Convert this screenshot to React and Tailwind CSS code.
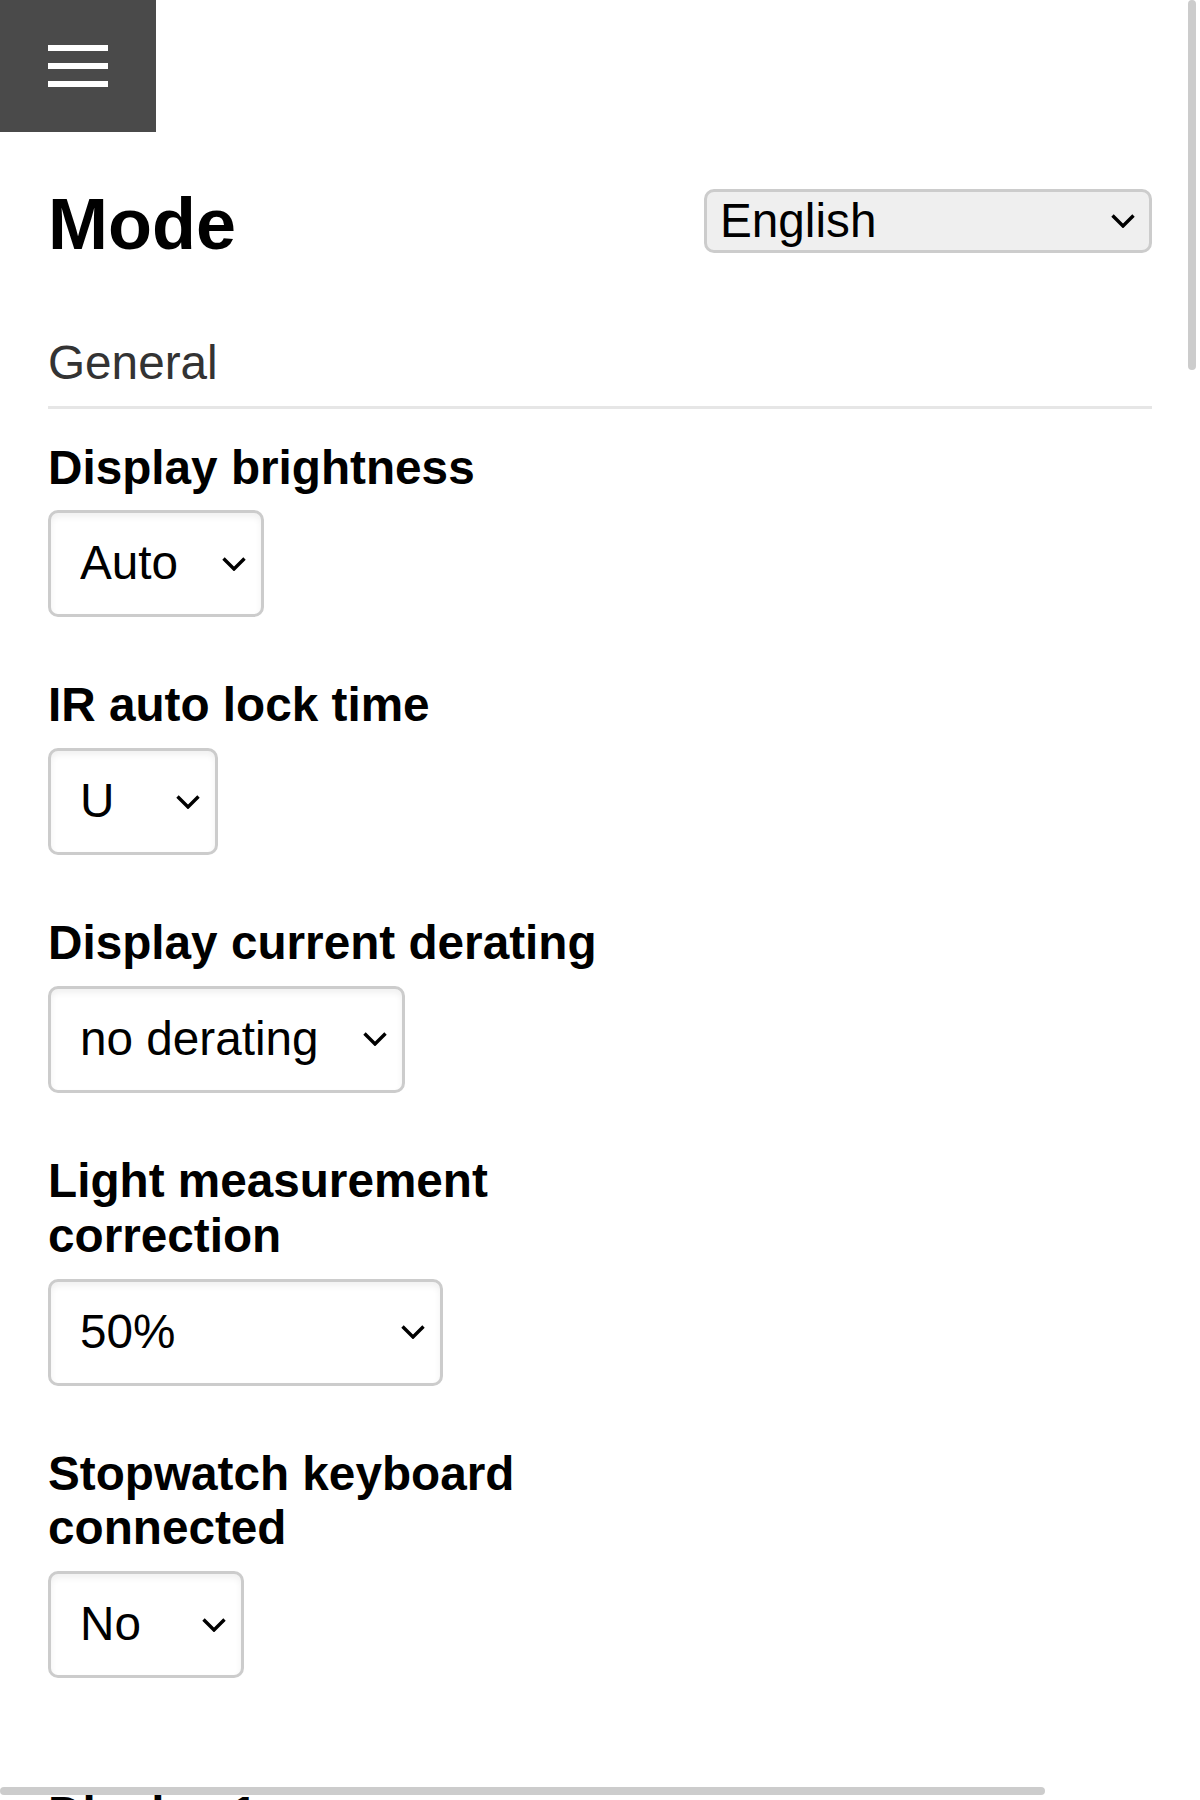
import React, { useState } from 'react';

function Chevron({ className }) {
  return (
    <svg viewBox="0 0 24 14" className={className} fill="none" stroke="currentColor" strokeWidth="3.4" strokeLinecap="butt" strokeLinejoin="miter">
      <polyline points="1.5,1.5 12,12 22.5,1.5" />
    </svg>
  );
}

function Field({ label, options, width }) {
  const [value, setValue] = useState(options[0]);

  return (
    <div className="flex flex-col items-start">
      <label className="block max-w-[600px] text-[47.7px] font-bold leading-[1.149] text-black">{label}</label>
      <div className={`relative mt-[15px] ${width}`}>
        <select
          value={value}
          onChange={(e) => setValue(e.target.value)}
          className="w-full h-[107px] appearance-none bg-white border-[3px] border-[#cccccc] rounded-[10px] pl-[29px] pr-[60px] py-0 text-[47.7px] leading-[1.149] text-black shadow-[inset_0_4px_6px_rgba(0,0,0,0.06)] outline-none"
        >
          {options.map((o) => (
            <option key={o} value={o}>{o}</option>
          ))}
        </select>
        <Chevron className="pointer-events-none absolute right-[18px] top-1/2 -translate-y-1/2 w-[24px] h-[14px] text-black" />
      </div>
    </div>
  );
}

export default function App() {
  const [lang, setLang] = useState('English');

  return (
    <div className="relative h-[1800px] overflow-hidden bg-white font-['Liberation_Sans',Arial,sans-serif] text-black">
      {/* Menu toggle */}
      <button className="w-[156px] h-[132px] bg-[#4a4a4a] flex flex-col items-center justify-center gap-[12px]">
        <span className="block w-[60px] h-[6px] bg-white" />
        <span className="block w-[60px] h-[6px] bg-white" />
        <span className="block w-[60px] h-[6px] bg-white" />
      </button>

      <div className="px-[48px]">
        {/* Header */}
        <div className="mt-[51px] flex items-start justify-between">
          <h1 className="text-[72px] font-bold leading-[1.149]">Mode</h1>
          <div className="relative mt-[6px] w-[448px]">
            <select
              value={lang}
              onChange={(e) => setLang(e.target.value)}
              className="w-full h-[64px] appearance-none bg-[#efefef] border-[3px] border-[#cccccc] rounded-[10px] pl-[13px] pr-[50px] py-0 text-[47.7px] leading-[1.149] text-black outline-none"
            >
              <option>English</option>
              <option>Deutsch</option>
              <option>Français</option>
            </select>
            <Chevron className="pointer-events-none absolute right-[17px] top-1/2 -translate-y-1/2 w-[24px] h-[14px] text-black" />
          </div>
        </div>

        {/* General section */}
        <h2 className="mt-[70px] pb-[15px] border-b-[3px] border-[#e6e6e6] text-[47.7px] font-normal leading-[1.149] text-[#333333]">
          General
        </h2>

        <div className="mt-[32px] flex flex-col gap-[61px]">
          <Field label="Display brightness" options={['Auto', 'Low', 'High']} width="w-[216px]" />
          <Field label="IR auto lock time" options={['U', '1', '5']} width="w-[170px]" />
          <Field label="Display current derating" options={['no derating', '50%']} width="w-[357px]" />
          <Field label="Light measurement correction" options={['50%', '100%']} width="w-[395px]" />
          <Field label="Stopwatch keyboard connected" options={['No', 'Yes']} width="w-[196px]" />
        </div>

        <h2 className="mt-[109px] text-[47.7px] font-bold leading-[1.149] text-black">Display 1</h2>
      </div>

      {/* overlay scroll indicators */}
      <div className="absolute top-0 right-[4px] w-[8px] h-[370px] rounded-full bg-[#cccccc]" />
      <div className="absolute bottom-[5px] left-0 w-[1045px] h-[8px] rounded-full bg-[#cccccc]" />
    </div>
  );
}
